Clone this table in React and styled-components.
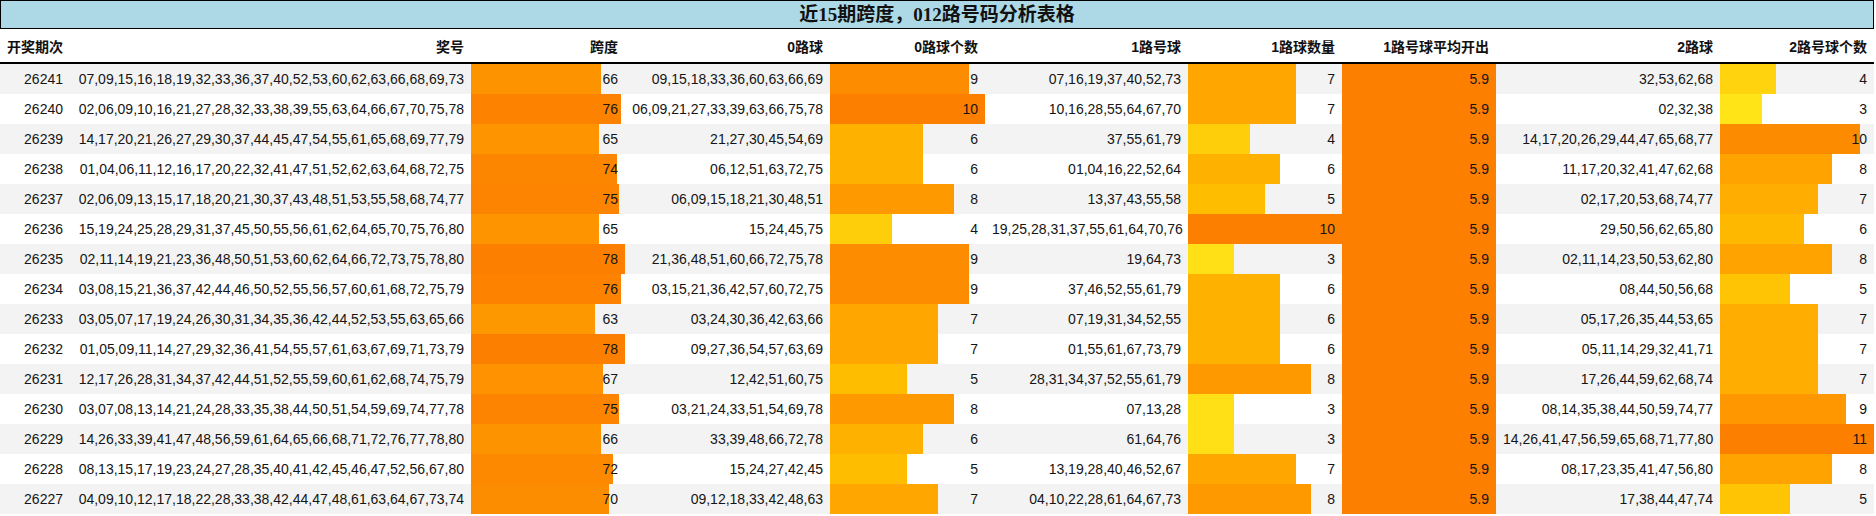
import React from 'react'
import styled, { createGlobalStyle } from 'styled-components'

const GlobalStyle = createGlobalStyle`
    body {
        margin      : 0;
        background  : #fff;
        font-family : "Liberation Sans", "Noto Sans CJK SC", sans-serif;
    }
`

const draws = [
    ['26241', '07,09,15,16,18,19,32,33,36,37,40,52,53,60,62,63,66,68,69,73', 66, '09,15,18,33,36,60,63,66,69', 9, '07,16,19,37,40,52,73', 7, 5.9, '32,53,62,68', 4],
    ['26240', '02,06,09,10,16,21,27,28,32,33,38,39,55,63,64,66,67,70,75,78', 76, '06,09,21,27,33,39,63,66,75,78', 10, '10,16,28,55,64,67,70', 7, 5.9, '02,32,38', 3],
    ['26239', '14,17,20,21,26,27,29,30,37,44,45,47,54,55,61,65,68,69,77,79', 65, '21,27,30,45,54,69', 6, '37,55,61,79', 4, 5.9, '14,17,20,26,29,44,47,65,68,77', 10],
    ['26238', '01,04,06,11,12,16,17,20,22,32,41,47,51,52,62,63,64,68,72,75', 74, '06,12,51,63,72,75', 6, '01,04,16,22,52,64', 6, 5.9, '11,17,20,32,41,47,62,68', 8],
    ['26237', '02,06,09,13,15,17,18,20,21,30,37,43,48,51,53,55,58,68,74,77', 75, '06,09,15,18,21,30,48,51', 8, '13,37,43,55,58', 5, 5.9, '02,17,20,53,68,74,77', 7],
    ['26236', '15,19,24,25,28,29,31,37,45,50,55,56,61,62,64,65,70,75,76,80', 65, '15,24,45,75', 4, '19,25,28,31,37,55,61,64,70,76', 10, 5.9, '29,50,56,62,65,80', 6],
    ['26235', '02,11,14,19,21,23,36,48,50,51,53,60,62,64,66,72,73,75,78,80', 78, '21,36,48,51,60,66,72,75,78', 9, '19,64,73', 3, 5.9, '02,11,14,23,50,53,62,80', 8],
    ['26234', '03,08,15,21,36,37,42,44,46,50,52,55,56,57,60,61,68,72,75,79', 76, '03,15,21,36,42,57,60,72,75', 9, '37,46,52,55,61,79', 6, 5.9, '08,44,50,56,68', 5],
    ['26233', '03,05,07,17,19,24,26,30,31,34,35,36,42,44,52,53,55,63,65,66', 63, '03,24,30,36,42,63,66', 7, '07,19,31,34,52,55', 6, 5.9, '05,17,26,35,44,53,65', 7],
    ['26232', '01,05,09,11,14,27,29,32,36,41,54,55,57,61,63,67,69,71,73,79', 78, '09,27,36,54,57,63,69', 7, '01,55,61,67,73,79', 6, 5.9, '05,11,14,29,32,41,71', 7],
    ['26231', '12,17,26,28,31,34,37,42,44,51,52,55,59,60,61,62,68,74,75,79', 67, '12,42,51,60,75', 5, '28,31,34,37,52,55,61,79', 8, 5.9, '17,26,44,59,62,68,74', 7],
    ['26230', '03,07,08,13,14,21,24,28,33,35,38,44,50,51,54,59,69,74,77,78', 75, '03,21,24,33,51,54,69,78', 8, '07,13,28', 3, 5.9, '08,14,35,38,44,50,59,74,77', 9],
    ['26229', '14,26,33,39,41,47,48,56,59,61,64,65,66,68,71,72,76,77,78,80', 66, '33,39,48,66,72,78', 6, '61,64,76', 3, 5.9, '14,26,41,47,56,59,65,68,71,77,80', 11],
    ['26228', '08,13,15,17,19,23,24,27,28,35,40,41,42,45,46,47,52,56,67,80', 72, '15,24,27,42,45', 5, '13,19,28,40,46,52,67', 7, 5.9, '08,17,23,35,41,47,56,80', 8],
    ['26227', '04,09,10,12,17,18,22,28,33,38,42,44,47,48,61,63,64,67,73,74', 70, '09,12,18,33,42,48,63', 7, '04,10,22,28,61,64,67,73', 8, 5.9, '17,38,44,47,74', 5],
]

const columns = [
    { title: '开奖期次', width: 70 },
    { title: '奖号', width: 401 },
    { title: '跨度', width: 154, bar: true },
    { title: '0路球', width: 205 },
    { title: '0路球个数', width: 155, bar: true },
    { title: '1路号球', width: 203 },
    { title: '1路球数量', width: 154, bar: true },
    { title: '1路号球平均开出', width: 154, bar: true },
    { title: '2路球', width: 224 },
    { title: '2路号球个数', width: 154, bar: true },
]

// matplotlib "Wistia"
const wistia = [
    [0, 228, 255, 122],
    [0.25, 255, 232, 26],
    [0.5, 255, 189, 0],
    [0.75, 255, 160, 0],
    [1, 252, 127, 0],
]

const colorAt = t => {
    for (let i = 1; i < wistia.length; i++) {
        const [p1, r1, g1, b1] = wistia[i]
        const [p0, r0, g0, b0] = wistia[i - 1]
        if (t <= p1) {
            const k = (t - p0) / (p1 - p0)
            const mix = (a, b) => Math.round(a + (b - a) * k)
            return `rgb(${mix(r0, r1)}, ${mix(g0, g1)}, ${mix(b0, b1)})`
        }
    }
    return 'rgb(252, 127, 0)'
}

const maxima = columns.map((col, i) => col.bar ? Math.max(...draws.map(r => r[i])) : null)

const App = () => {
    return (
        <>
            <GlobalStyle />
            <Sheet>
                <Title>近15期跨度，012路号码分析表格</Title>
                <Grid>
                    <colgroup>
                        {columns.map((col, i) => <col key={i} style={{ width: col.width }} />)}
                    </colgroup>
                    <thead>
                        <tr>
                            {columns.map((col, i) => <HeadCell key={i}>{col.title}</HeadCell>)}
                        </tr>
                    </thead>
                    <tbody>
                        {draws.map((row, r) => (
                            <Row key={r}>
                                {row.map((value, c) => {
                                    if (!columns[c].bar) return <Cell key={c}>{value}</Cell>
                                    const ratio = value / maxima[c]
                                    return (
                                        <Cell
                                            key={c}
                                            $pct={ratio * 100}
                                            $color={colorAt(ratio)}
                                        >
                                            {value}
                                        </Cell>
                                    )
                                })}
                            </Row>
                        ))}
                    </tbody>
                </Grid>
            </Sheet>
        </>
    )
}

export default App

const Sheet = styled.div`
    width : 1874px;
`

const Title = styled.div`
    height      : 29px;
    box-sizing  : border-box;
    border      : 1px solid #000;
    background  : #add8e6;
    text-align  : center;
    font-family : "Liberation Serif", "Noto Sans CJK SC", serif;
    font-size   : 19px;
    font-weight : bold;
    line-height : 27px;
    color       : #111;
`

const Grid = styled.table`
    width           : 1874px;
    table-layout    : fixed;
    border-collapse : separate;
    border-spacing  : 0;
    font-size       : 14px;
    color           : #151515;
`

const HeadCell = styled.th`
    height        : 35px;
    box-sizing    : border-box;
    padding       : 0 7px;
    border-bottom : 2px solid #000;
    text-align    : right;
    font-weight   : bold;
    white-space   : nowrap;
    color         : #111;
`

const Row = styled.tr`
    &:nth-child(odd) {
        background : #f3f3f3;
    }
`

const Cell = styled.td`
    height      : 30px;
    box-sizing  : border-box;
    padding     : 0 7px;
    text-align  : right;
    white-space : nowrap;
    background  : ${p => p.$color
        ? `linear-gradient(90deg, ${p.$color} ${p.$pct}%, transparent ${p.$pct}%)`
        : 'transparent'};
`
